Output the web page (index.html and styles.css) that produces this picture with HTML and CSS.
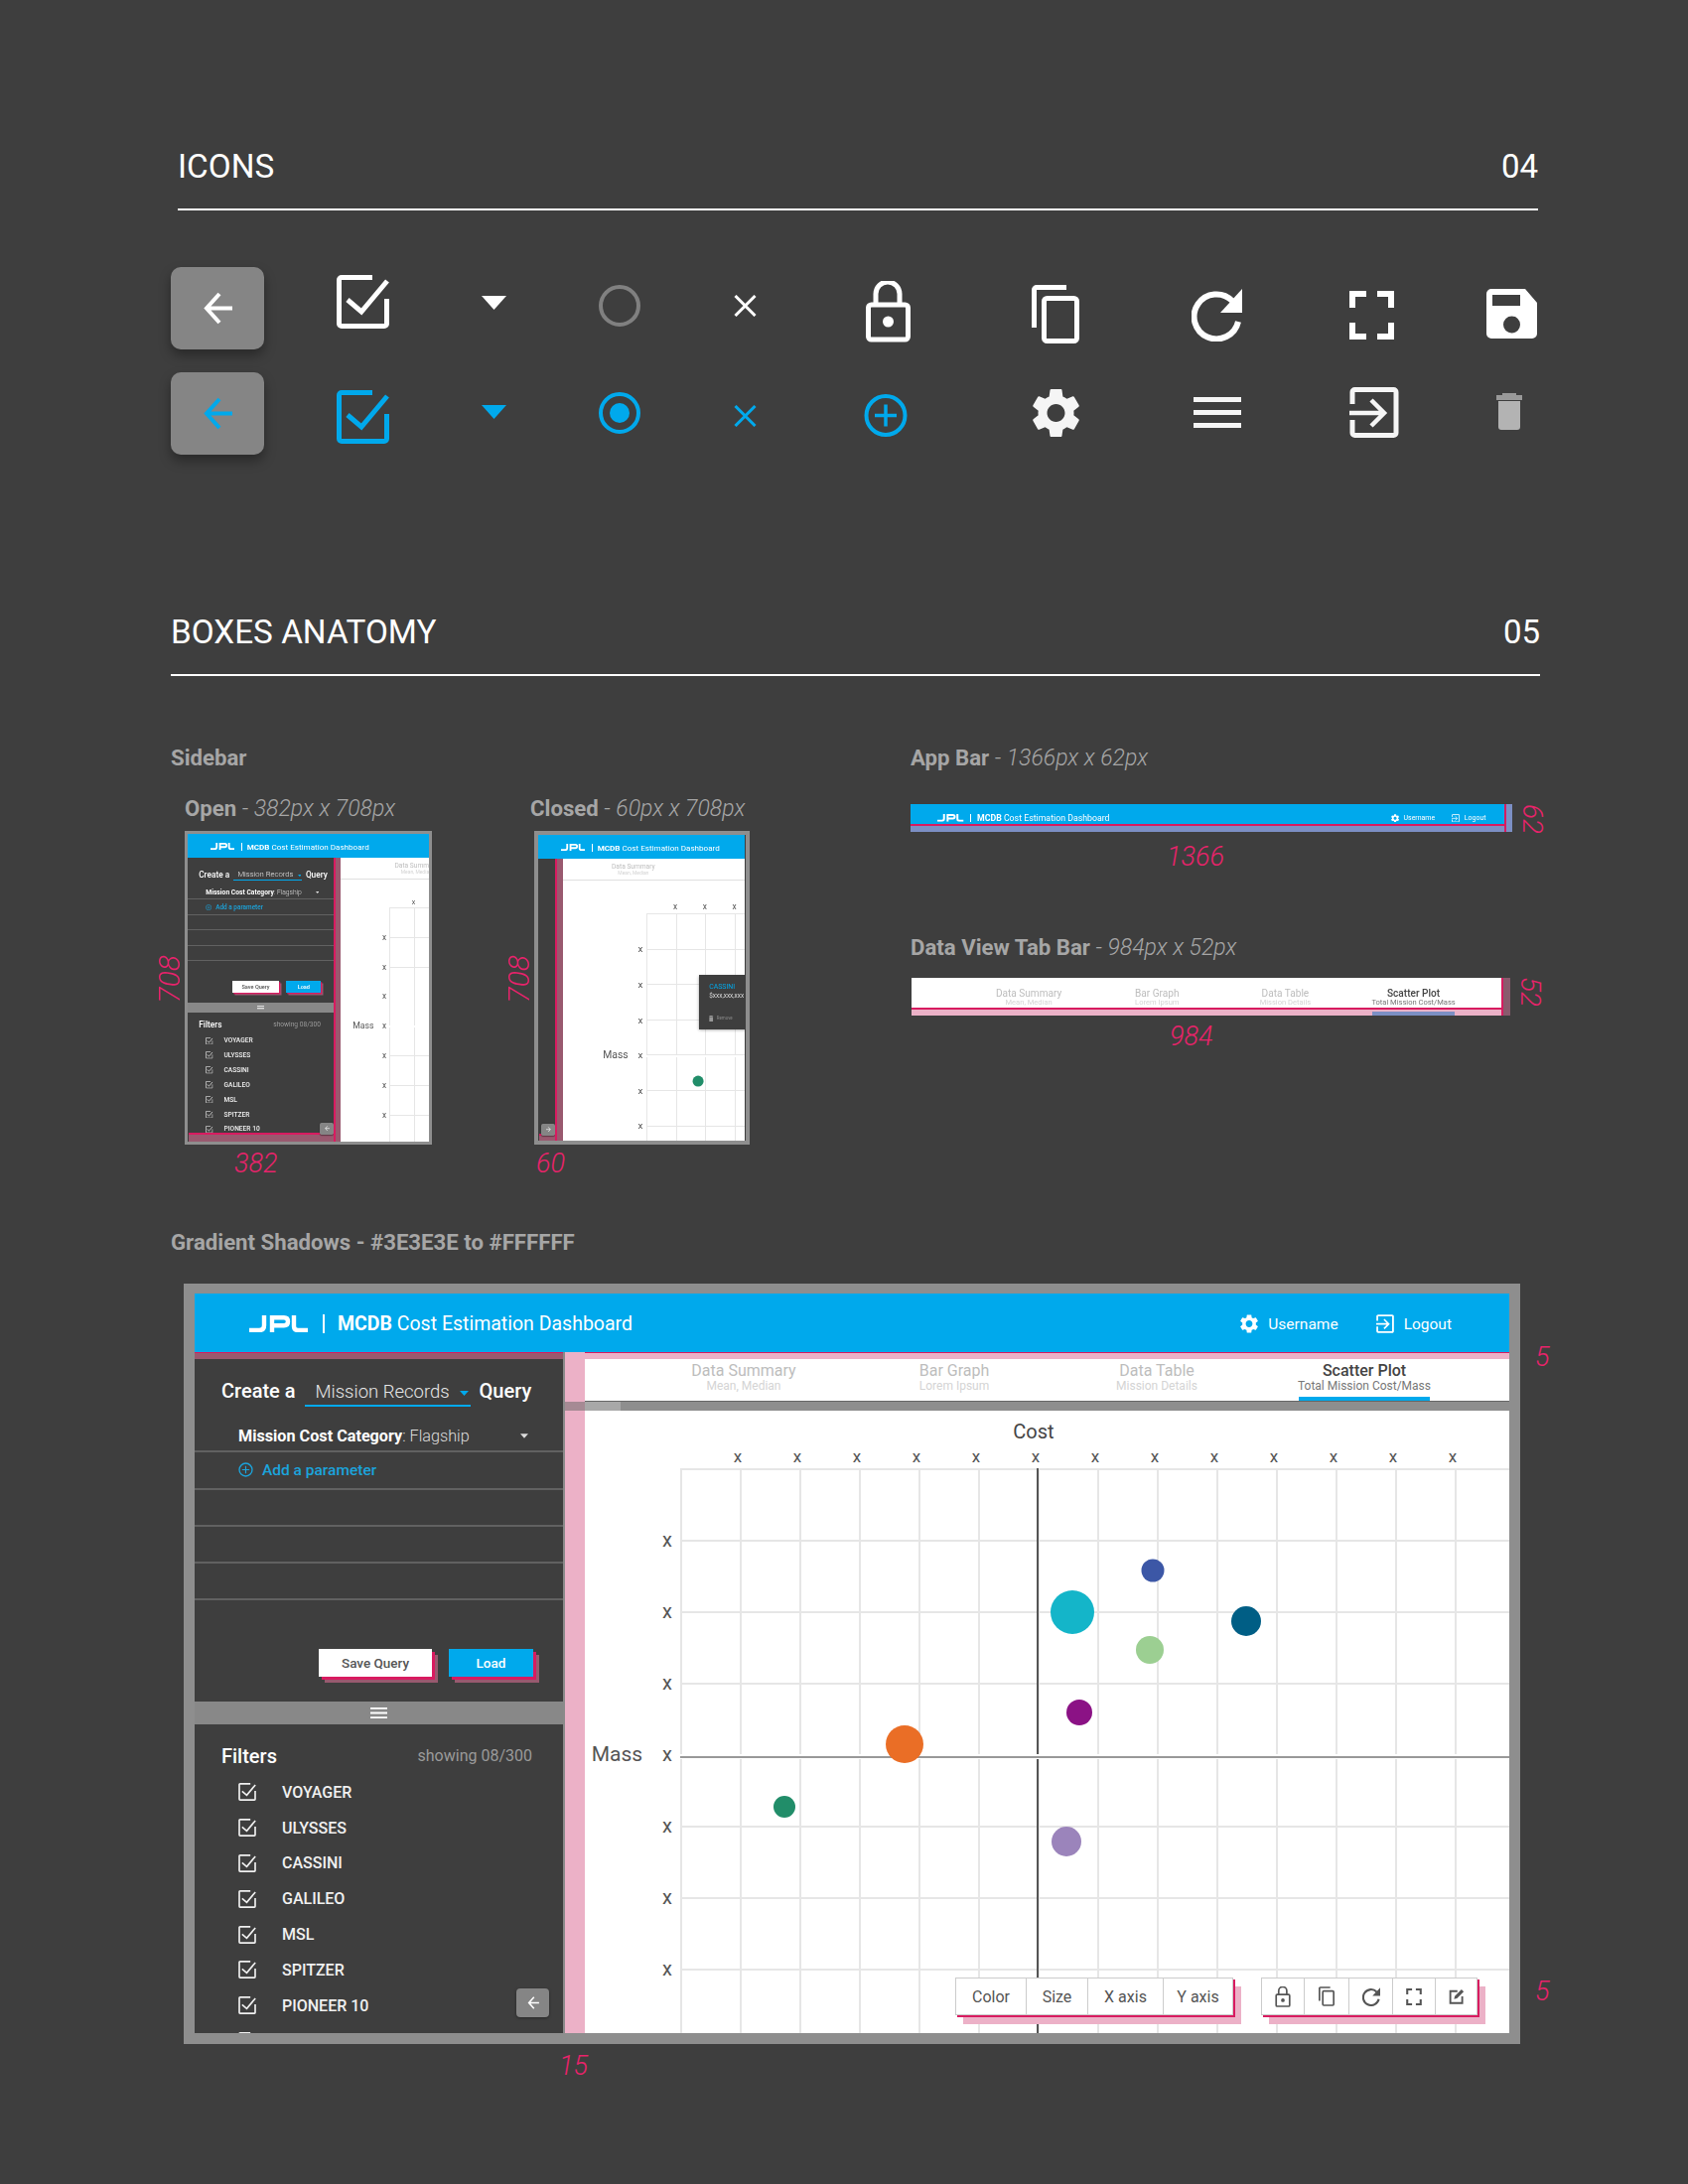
FILE: index.html
```html
<!DOCTYPE html>
<html lang="en">
<head>
    <meta charset="UTF-8">
    <title>MCDB style guide</title>
    <link rel="stylesheet" href="styles.css">
</head>
<body>
    <!-- icon set, used everywhere with <use> -->
    <svg class="icon-defs">
        <symbol id="i-back" viewBox="0 0 30 33"><path d="M30 16.5H4M17 2 4 16.5 17 31" fill="none" stroke="currentColor" stroke-width="4"/></symbol>
        <symbol id="i-check" viewBox="0 0 53 54"><path d="M36 2.5H5A2.5 2.5 0 0 0 2.5 5v44A2.5 2.5 0 0 0 5 51.500h43a2.500 2.500 0 0 0 2.500-2.500V24M11 25l14 12L51 6" fill="none" stroke="currentColor" stroke-width="5"/></symbol>
        <symbol id="i-tri" viewBox="0 0 25 14"><path d="M0 0h25L12.500 14z" fill="currentColor"/></symbol>
        <symbol id="i-circle" viewBox="0 0 42 42"><circle cx="21" cy="21" r="19" fill="none" stroke="currentColor" stroke-width="4"/></symbol>
        <symbol id="i-radio" viewBox="0 0 42 42"><circle cx="21" cy="21" r="19" fill="none" stroke="currentColor" stroke-width="4"/><circle cx="21" cy="21" r="10" fill="currentColor"/></symbol>
        <symbol id="i-x" viewBox="0 0 23 22"><path d="M1.500 1 21.500 21M21.500 1 1.500 21" fill="none" stroke="currentColor" stroke-width="3"/></symbol>
        <symbol id="i-lock" viewBox="0 0 45 62"><rect x="2.500" y="24" width="40" height="35" rx="3" fill="none" stroke="currentColor" stroke-width="5"/><path d="M10 24V13a12 12 0 0 1 24 0v11" fill="none" stroke="currentColor" stroke-width="5"/><circle cx="22.500" cy="41" r="5.500" fill="currentColor"/></symbol>
        <symbol id="i-copy" viewBox="0 0 48 59"><path d="M35 2.500H5A2.500 2.500 0 0 0 2.500 5v38" fill="none" stroke="currentColor" stroke-width="5"/><rect x="12.500" y="13.500" width="33" height="43" rx="3" fill="none" stroke="currentColor" stroke-width="5"/></symbol>
        <symbol id="i-refresh" viewBox="0 0 51 53"><path d="M41 12A22.500 22.500 0 1 0 47 33" fill="none" stroke="currentColor" stroke-width="6"/><path d="M51 0v24H29z" fill="currentColor"/></symbol>
        <symbol id="i-full" viewBox="0 0 45 49"><path d="M3 17V3h14M28 3h14v14M42 32v14H28M17 46H3V32" fill="none" stroke="currentColor" stroke-width="6"/></symbol>
        <symbol id="i-save" viewBox="0 0 51 50"><path fill-rule="evenodd" d="M5 0h34l12 14v31a5 5 0 0 1-5 5H5a5 5 0 0 1-5-5V5a5 5 0 0 1 5-5zM6 6v11h28V6zM25.500 27.500a8.500 8.500 0 1 0 0 17 8.500 8.500 0 0 0 0-17z" fill="currentColor"/></symbol>
        <symbol id="i-plus" viewBox="0 0 44 45"><circle cx="22" cy="22.500" r="19.500" fill="none" stroke="currentColor" stroke-width="4"/><path d="M11 22.500h22M22 11.500v22" fill="none" stroke="currentColor" stroke-width="3.500"/></symbol>
        <symbol id="i-gear" viewBox="2.500 2 19 20"><path fill="currentColor" d="M19.140 12.940c.04-.3.06-.61.06-.94 0-.32-.02-.64-.07-.94l2.030-1.580c.18-.14.23-.41.12-.61l-1.920-3.320c-.12-.22-.37-.29-.59-.22l-2.390.96c-.5-.38-1.030-.7-1.620-.94l-.36-2.540c-.04-.24-.24-.41-.48-.41h-3.840c-.24 0-.43.17-.47.41l-.36 2.540c-.59.24-1.130.57-1.620.94l-2.390-.96c-.22-.08-.47 0-.59.22L2.740 8.870c-.12.21-.08.47.12.61l2.030 1.580c-.05.3-.09.63-.09.94s.02.64.07.94l-2.030 1.580c-.18.14-.23.41-.12.61l1.920 3.320c.12.22.37.29.59.22l2.390-.96c.5.38 1.030.7 1.620.94l.36 2.540c.05.24.24.41.48.41h3.840c.24 0 .44-.17.47-.41l.36-2.540c.59-.24 1.130-.56 1.620-.94l2.390.96c.22.08.47 0 .59-.22l1.920-3.320c.12-.22.07-.47-.12-.61l-2.010-1.580zM12 15.600c-1.980 0-3.600-1.620-3.600-3.600s1.620-3.600 3.600-3.600 3.600 1.620 3.600 3.600-1.620 3.600-3.600 3.600z"/></symbol>
        <symbol id="i-menu" viewBox="0 0 48 31"><path d="M0 0h48v5H0zM0 13h48v5H0zM0 26h48v5H0z" fill="currentColor"/></symbol>
        <symbol id="i-exit" viewBox="0 0 50 51"><path d="M3 17V5A2.500 2.500 0 0 1 5.500 2.500h39A2.500 2.500 0 0 1 47 5v41a2.500 2.500 0 0 1-2.500 2.500h-39A2.500 2.500 0 0 1 3 46V33" fill="none" stroke="currentColor" stroke-width="5"/><path d="M0 26h34M22 13l13 13-13 13" fill="none" stroke="currentColor" stroke-width="4.500"/></symbol>
        <symbol id="i-trash" viewBox="0 0 26 37"><path d="M6 2V0h14v2h6v5H0V2z" fill="#999"/><path d="M2 8h22v26a3 3 0 0 1-3 3H5a3 3 0 0 1-3-3z" fill="currentColor"/></symbol>
        <symbol id="i-edit" viewBox="0 0 24 24"><path d="M13 5H3.500v16h16v-9" fill="none" stroke="currentColor" stroke-width="2.500"/><path d="m8.500 15.500 1-4L18.500 2.500 21.500 5.500 12.500 14.500z" fill="currentColor"/></symbol>
        <symbol id="i-jpl" viewBox="0 0 59 17"><path d="M0 15h10q5 0 5-5V0M23 17V2.200h12q4 0 4 4t-4 4H23M45 0v11q0 4 4 4h10" fill="none" stroke="currentColor" stroke-width="4.400"/></symbol>
    </svg>

    <section class="head head-icons">
        <h2>ICONS</h2>
        <span>04</span>
    </section>

    <div class="icon-grid">
        <div class="back-btn"><svg class="ic-back"><use href="#i-back"/></svg></div>
        <svg class="ic-check t8"><use href="#i-check"/></svg>
        <svg class="ic-tri t29"><use href="#i-tri"/></svg>
        <svg class="ic-circle t18 grey"><use href="#i-circle"/></svg>
        <svg class="ic-x t28"><use href="#i-x"/></svg>
        <svg class="ic-lock t14 l2"><use href="#i-lock"/></svg>
        <svg class="ic-copy t18"><use href="#i-copy"/></svg>
        <svg class="ic-refresh t22"><use href="#i-refresh"/></svg>
        <svg class="ic-full t24 l1"><use href="#i-full"/></svg>
        <svg class="ic-save t22"><use href="#i-save"/></svg>

        <div class="back-btn blue"><svg class="ic-back"><use href="#i-back"/></svg></div>
        <svg class="ic-check t18 blue"><use href="#i-check"/></svg>
        <svg class="ic-tri t33 blue"><use href="#i-tri"/></svg>
        <svg class="ic-circle t20 blue"><use href="#i-radio"/></svg>
        <svg class="ic-x t33 blue"><use href="#i-x"/></svg>
        <svg class="ic-plus t21 blue"><use href="#i-plus"/></svg>
        <svg class="ic-gear t16"><use href="#i-gear"/></svg>
        <svg class="ic-menu t25 l2"><use href="#i-menu"/></svg>
        <svg class="ic-exit t15 l1"><use href="#i-exit"/></svg>
        <svg class="ic-trash t21 l10"><use href="#i-trash"/></svg>
    </div>

    <section class="head head-boxes">
        <h2>BOXES ANATOMY</h2>
        <span>05</span>
    </section>

    <div class="boxes">
        <div class="boxes-left">
            <h3 class="cap">Sidebar</h3>
            <div class="figs">
                <div class="fig fig-open">
                    <h3 class="cap">Open <em>- 382px x 708px</em></h3>
                    <div class="frame-wrap">
                        <div class="frame">
                            <div class="dash dash-open">
                                <header class="appbar">
                                    <svg class="jpl"><use href="#i-jpl"/></svg>
                                    <i class="bar-sep"></i>
                                    <span class="app-title"><b>MCDB</b> Cost Estimation Dashboard</span>
                                </header>
                                <div class="dash-body">
                                    <aside class="sidebar">
                                        <div class="side-shade"></div>
                                        <div class="create-row">
                                            <span>Create a</span>
                                            <div class="select"><span>Mission Records</span><svg class="sel-arrow"><use href="#i-tri"/></svg></div>
                                            <span>Query</span>
                                        </div>
                                        <div class="param first"><span><b>Mission Cost Category</b>: Flagship</span><svg class="param-arrow"><use href="#i-tri"/></svg></div>
                                        <div class="param add"><svg class="add-ic"><use href="#i-plus"/></svg><span>Add a parameter</span></div>
                                        <div class="param"></div>
                                        <div class="param"></div>
                                        <div class="param"></div>
                                        <div class="query-btns"><button class="btn">Save Query</button><button class="btn btn-load">Load</button></div>
                                        <div class="side-split"><svg class="split-ic"><use href="#i-menu"/></svg></div>
                                        <div class="filter-head"><span>Filters</span><small>showing 08/300</small></div>
                                        <ul class="filter-list">
                                            <li><svg><use href="#i-check"/></svg>VOYAGER</li>
                                            <li><svg><use href="#i-check"/></svg>ULYSSES</li>
                                            <li><svg><use href="#i-check"/></svg>CASSINI</li>
                                            <li><svg><use href="#i-check"/></svg>GALILEO</li>
                                            <li><svg><use href="#i-check"/></svg>MSL</li>
                                            <li><svg><use href="#i-check"/></svg>SPITZER</li>
                                            <li><svg><use href="#i-check"/></svg>PIONEER 10</li>
                                        </ul>
                                        <div class="back-small"><svg><use href="#i-back"/></svg></div>
                                    </aside>
                                    <div class="view">
                                        <div class="strip"></div>
                                        <div class="view-main">
                                            <div class="tabs">
                                                <div class="tab"><span class="tab-title">Data Summary</span><span class="tab-sub">Mean, Median</span></div>
                                            </div>
                                            <div class="chart">
                                                <div class="x-labels"><span>x</span></div>
                                                <div class="plot-row">
                                                    <div class="y-axis">
                                                        <div class="y-row">x</div>
                                                        <div class="y-row">x</div>
                                                        <div class="y-row">x</div>
                                                        <div class="y-row"><span class="mass">Mass</span>x</div>
                                                        <div class="y-row">x</div>
                                                        <div class="y-row">x</div>
                                                        <div class="y-row">x</div>
                                                    </div>
                                                    <div class="plot"><i class="axis-x"></i></div>
                                                </div>
                                            </div>
                                        </div>
                                    </div>
                                </div>
                            </div>
                        </div>
                        <span class="dim dim-up d-708">708</span>
                        <span class="dim d-382">382</span>
                    </div>
                </div>
                <div class="fig fig-closed">
                    <h3 class="cap">Closed <em>- 60px x 708px</em></h3>
                    <div class="frame-wrap">
                        <div class="frame">
                            <div class="dash dash-closed">
                                <header class="appbar">
                                    <svg class="jpl"><use href="#i-jpl"/></svg>
                                    <i class="bar-sep"></i>
                                    <span class="app-title"><b>MCDB</b> Cost Estimation Dashboard</span>
                                </header>
                                <div class="dash-body">
                                    <aside class="sidebar">
                                        <div class="back-small"><svg class="flip"><use href="#i-back"/></svg></div>
                                    </aside>
                                    <div class="view">
                                        <div class="strip"></div>
                                        <div class="view-main">
                                            <div class="tabs">
                                                <div class="tab"><span class="tab-title">Data Summary</span><span class="tab-sub">Mean, Median</span></div>
                                            </div>
                                            <div class="chart">
                                                <div class="x-labels"><span>x</span><span>x</span><span>x</span></div>
                                                <div class="plot-row">
                                                    <div class="y-axis">
                                                        <div class="y-row">x</div>
                                                        <div class="y-row">x</div>
                                                        <div class="y-row">x</div>
                                                        <div class="y-row"><span class="mass">Mass</span>x</div>
                                                        <div class="y-row">x</div>
                                                        <div class="y-row">x</div>
                                                    </div>
                                                    <div class="plot">
                                                        <i class="axis-x"></i>
                                                        <i class="dot dot-green"></i>
                                                        <div class="tooltip">
                                                            <strong>CASSINI</strong>
                                                            <p>$xxx,xxx,xxx</p>
                                                            <span><svg><use href="#i-trash"/></svg>Remove</span>
                                                        </div>
                                                    </div>
                                                </div>
                                            </div>
                                        </div>
                                    </div>
                                </div>
                            </div>
                        </div>
                        <span class="dim dim-up d-708">708</span>
                        <span class="dim d-60">60</span>
                    </div>
                </div>
            </div>
        </div>

        <div class="boxes-right">
            <h3 class="cap">App Bar <em>- 1366px x 62px</em></h3>
            <div class="bar-fig">
                <div class="bar-clip">
                    <header class="appbar appbar-mini">
                        <svg class="jpl"><use href="#i-jpl"/></svg>
                        <i class="bar-sep"></i>
                        <span class="app-title"><b>MCDB</b> Cost Estimation Dashboard</span>
                        <div class="app-links">
                            <span><svg class="ic-link"><use href="#i-gear"/></svg>Username</span>
                            <span><svg class="ic-link"><use href="#i-exit"/></svg>Logout</span>
                        </div>
                    </header>
                </div>
                <span class="dim dim-down d-62">62</span>
                <span class="dim d-1366">1366</span>
            </div>

            <h3 class="cap cap-tabbar">Data View Tab Bar <em>- 984px x 52px</em></h3>
            <div class="tab-fig">
                <div class="tab-clip">
                    <div class="tabs tabs-mini">
                        <div class="tab"><span class="tab-title">Data Summary</span><span class="tab-sub">Mean, Median</span></div>
                        <div class="tab"><span class="tab-title">Bar Graph</span><span class="tab-sub">Lorem Ipsum</span></div>
                        <div class="tab"><span class="tab-title">Data Table</span><span class="tab-sub">Mission Details</span></div>
                        <div class="tab active"><span class="tab-title">Scatter Plot</span><span class="tab-sub">Total Mission Cost/Mass</span></div>
                    </div>
                </div>
                <span class="dim dim-down d-52">52</span>
                <span class="dim d-984">984</span>
            </div>
        </div>
    </div>

    <h3 class="cap cap-gradient">Gradient Shadows - #3E3E3E to #FFFFFF</h3>

    <div class="big-wrap">
        <div class="dash dash-big">
            <header class="appbar">
                <svg class="jpl"><use href="#i-jpl"/></svg>
                <i class="bar-sep"></i>
                <span class="app-title"><b>MCDB</b> Cost Estimation Dashboard</span>
                <div class="app-links">
                    <span><svg class="ic-link"><use href="#i-gear"/></svg>Username</span>
                    <span><svg class="ic-link"><use href="#i-exit"/></svg>Logout</span>
                </div>
            </header>
            <div class="dash-body">
                <aside class="sidebar">
                    <div class="side-shade"></div>
                    <div class="create-row">
                        <span>Create a</span>
                        <div class="select"><span>Mission Records</span><svg class="sel-arrow"><use href="#i-tri"/></svg></div>
                        <span>Query</span>
                    </div>
                    <div class="param first"><span><b>Mission Cost Category</b>: Flagship</span><svg class="param-arrow"><use href="#i-tri"/></svg></div>
                    <div class="param add"><svg class="add-ic"><use href="#i-plus"/></svg><span>Add a parameter</span></div>
                    <div class="param"></div>
                    <div class="param"></div>
                    <div class="param"></div>
                    <div class="query-btns"><button class="btn">Save Query</button><button class="btn btn-load">Load</button></div>
                    <div class="side-split"><svg class="split-ic"><use href="#i-menu"/></svg></div>
                    <div class="filter-head"><span>Filters</span><small>showing 08/300</small></div>
                    <ul class="filter-list">
                        <li><svg><use href="#i-check"/></svg>VOYAGER</li>
                        <li><svg><use href="#i-check"/></svg>ULYSSES</li>
                        <li><svg><use href="#i-check"/></svg>CASSINI</li>
                        <li><svg><use href="#i-check"/></svg>GALILEO</li>
                        <li><svg><use href="#i-check"/></svg>MSL</li>
                        <li><svg><use href="#i-check"/></svg>SPITZER</li>
                        <li><svg><use href="#i-check"/></svg>PIONEER 10</li>
                        <li><svg><use href="#i-check"/></svg></li>
                    </ul>
                    <div class="back-small"><svg><use href="#i-back"/></svg></div>
                </aside>
                <div class="view">
                    <div class="strip"></div>
                    <div class="view-main">
                        <div class="view-shade"></div>
                        <div class="tabs">
                            <div class="tab"><span class="tab-title">Data Summary</span><span class="tab-sub">Mean, Median</span></div>
                            <div class="tab"><span class="tab-title">Bar Graph</span><span class="tab-sub">Lorem Ipsum</span></div>
                            <div class="tab"><span class="tab-title">Data Table</span><span class="tab-sub">Mission Details</span></div>
                            <div class="tab active"><span class="tab-title">Scatter Plot</span><span class="tab-sub">Total Mission Cost/Mass</span></div>
                        </div>
                        <div class="band"></div>
                        <div class="chart">
                            <div class="chart-title">Cost</div>
                            <div class="x-labels">
                                <span>x</span><span>x</span><span>x</span><span>x</span><span>x</span><span>x</span><span>x</span><span>x</span><span>x</span><span>x</span><span>x</span><span>x</span><span>x</span>
                            </div>
                            <div class="plot-row">
                                <div class="y-axis">
                                    <div class="y-row">x</div>
                                    <div class="y-row">x</div>
                                    <div class="y-row">x</div>
                                    <div class="y-row"><span class="mass">Mass</span>x</div>
                                    <div class="y-row">x</div>
                                    <div class="y-row">x</div>
                                    <div class="y-row">x</div>
                                </div>
                                <div class="plot">
                                    <i class="axis-y"></i>
                                    <i class="axis-x"></i>
                                    <i class="dot dot-blue"></i>
                                    <i class="dot dot-cyan"></i>
                                    <i class="dot dot-lime"></i>
                                    <i class="dot dot-navy"></i>
                                    <i class="dot dot-purple"></i>
                                    <i class="dot dot-orange"></i>
                                    <i class="dot dot-green"></i>
                                    <i class="dot dot-lavender"></i>
                                </div>
                            </div>
                            <div class="toolbars">
                                <div class="toolbar">
                                    <span class="tool w71">Color</span>
                                    <span class="tool w62">Size</span>
                                    <span class="tool w76">X axis</span>
                                    <span class="tool w69">Y axis</span>
                                </div>
                                <div class="toolbar">
                                    <span class="tool w43"><svg class="t-lock"><use href="#i-lock"/></svg></span>
                                    <span class="tool w45"><svg class="t-copy"><use href="#i-copy"/></svg></span>
                                    <span class="tool w44"><svg class="t-refresh"><use href="#i-refresh"/></svg></span>
                                    <span class="tool w43"><svg class="t-full"><use href="#i-full"/></svg></span>
                                    <span class="tool w41"><svg class="t-edit"><use href="#i-edit"/></svg></span>
                                </div>
                            </div>
                        </div>
                    </div>
                </div>
            </div>
        </div>
        <span class="dim d-5a">5</span>
        <span class="dim d-5b">5</span>
        <span class="dim d-15">15</span>
    </div>
</body>
</html>
```

FILE: styles.css
```css
* {
    margin: 0;
    padding: 0;
    box-sizing: border-box;
}

body {
    background-color: #3e3e3e;
    font-family: Roboto, 'Noto Sans', sans-serif;
    color: #fff;
    width: 1700px;
    min-height: 2200px;
    padding-top: 148px;
}

.icon-defs {
    display: block;
    width: 0;
    height: 0;
}

svg {
    display: block;
}

/* section headers */
.head {
    display: flex;
    justify-content: space-between;
    border-bottom: 2px solid #fff;
    font-size: 33px;
    line-height: 40px;
}

.head h2 {
    font-weight: 400;
    font-size: 33.300px;
}

.head-icons {
    margin-left: 179px;
    width: 1370px;
    padding-bottom: 22px;
}

.head-boxes {
    margin-left: 172px;
    width: 1379px;
    margin-top: 136px;
    padding-bottom: 22px;
}

/* icon sheet */
.icon-grid {
    margin: 57px 0 0 172px;
    display: grid;
    grid-template-columns: 167px 146px 118px 136px 131px 169px 161px 158px 139px 60px;
    grid-auto-rows: 106px;
    align-items: start;
    justify-items: start;
    color: #fff;
}

.blue { color: #00a9ec; }
.grey { color: #808080; }

.t8 { margin-top: 8px; }
.t14 { margin-top: 14px; }
.t15 { margin-top: 15px; }
.t16 { margin-top: 16px; }
.t18 { margin-top: 18px; }
.t20 { margin-top: 20px; }
.t21 { margin-top: 21px; }
.t22 { margin-top: 22px; }
.t24 { margin-top: 24px; }
.t25 { margin-top: 25px; }
.t28 { margin-top: 28px; }
.t29 { margin-top: 29px; }
.t33 { margin-top: 33px; }
.l1 { margin-left: 1px; }
.l2 { margin-left: 2px; }
.l10 { margin-left: 10px; }

.back-btn {
    width: 94px;
    height: 83px;
    background-color: #858585;
    border-radius: 10px;
    box-shadow: 0 6px 12px rgba(0, 0, 0, 0.35);
    display: flex;
    justify-content: center;
    align-items: center;
}

.ic-back { width: 30px; height: 33px; }
.ic-check { width: 53px; height: 54px; }
.ic-tri { width: 25px; height: 14px; }
.ic-circle { width: 42px; height: 42px; }
.ic-x { width: 23px; height: 22px; }
.ic-lock { width: 45px; height: 62px; }
.ic-copy { width: 48px; height: 59px; }
.ic-refresh { width: 51px; height: 53px; }
.ic-full { width: 45px; height: 49px; }
.ic-save { width: 51px; height: 50px; }
.ic-plus { width: 44px; height: 45px; }
.ic-gear { width: 49px; height: 50px; color: #f5f5f5; }
.ic-menu { width: 48px; height: 31px; color: #f5f5f5; }
.ic-exit { width: 50px; height: 51px; color: #f5f5f5; }
.ic-trash { width: 26px; height: 37px; color: #b3b3b3; }

/* captions and red measures */
.cap {
    font-size: 22.200px;
    line-height: 26px;
    font-weight: 700;
    color: #a6a6a6;
}

.cap em {
    font-size: 23px;
    line-height: 1;
    font-weight: 300;
    font-style: italic;
}

.dim {
    position: absolute;
    font-size: 27px;
    line-height: 29px;
    font-weight: 300;
    font-style: italic;
    color: #e9236b;
}

.dim-up {
    writing-mode: vertical-rl;
    transform: rotate(180deg);
    font-size: 30px;
}

.dim-down {
    writing-mode: vertical-rl;
    font-size: 28px;
}

.boxes {
    display: grid;
    grid-template-columns: 745px 1fr;
    margin: 69px 0 0 172px;
}

.figs {
    display: flex;
    margin-top: 25px;
}

.fig-open {
    margin-left: 14px;
    width: 348px;
}

.frame-wrap {
    position: relative;
    margin-top: 10px;
}

.frame {
    border: 3px solid #8e8e8e;
    overflow: hidden;
    width: 249px;
    height: 316px;
    filter: blur(0.35px);
}

.fig-closed .frame-wrap {
    margin-left: 4px;
}

.fig-closed .frame {
    border-width: 4px;
    width: 217px;
}

.d-708 { left: -30px; top: 125px; }
.d-382 { left: 50px; top: 321px; }
.d-60 { left: 2px; top: 321px; }

/* the dashboard, also shrunk with zoom for the small figures */
.dash {
    display: flex;
    flex-direction: column;
    width: 1324px;
    height: 745px;
    overflow: hidden;
    background-color: #fff;
}

.dash-body {
    flex: 1;
    display: flex;
    min-height: 0;
}

.appbar {
    flex: none;
    height: 59px;
    background-color: #00a9ec;
    display: flex;
    align-items: center;
    padding: 2px 58px 0 55px;
    color: #fff;
}

.jpl {
    width: 59px;
    height: 17px;
}

.bar-sep {
    width: 2px;
    height: 19px;
    background-color: #fff;
    margin: 0 13px 0 15px;
}

.app-title {
    font-size: 19.500px;
}

.app-title b {
    font-weight: 700;
}

.app-links {
    margin-left: auto;
    display: flex;
    gap: 38px;
    font-size: 15.500px;
}

.app-links span {
    display: flex;
    align-items: center;
    gap: 10px;
}

.ic-link {
    width: 18px;
    height: 19px;
}

.sidebar {
    flex: none;
    width: 371px;
    background-color: #3e3e3e;
    position: relative;
    overflow: hidden;
}

.side-shade {
    height: 7px;
    background-color: #99596f;
    border-top: 1px solid #d81b60;
}

.create-row {
    margin-top: 16px;
    height: 32px;
    padding-left: 27px;
    display: flex;
    align-items: center;
    font-size: 20px;
    font-weight: 500;
}

.select {
    width: 167px;
    height: 32px;
    margin: 0 9px 0 9px;
    padding: 3px 2px 0 11px;
    border-bottom: 2px solid #00a9ec;
    display: flex;
    justify-content: space-between;
    align-items: center;
    font-size: 18.500px;
    font-weight: 300;
    color: #e6e6e6;
}

.sel-arrow {
    width: 9px;
    height: 5px;
    color: #00a9ec;
    margin-top: 4px;
}

.param {
    height: 37px;
    padding: 0 35px 0 44px;
    border-bottom: 2px solid #616161;
    display: flex;
    align-items: center;
}

.param.first {
    height: 46px;
    padding-top: 19px;
    padding-bottom: 4px;
    justify-content: space-between;
    font-size: 16.200px;
    font-weight: 300;
    color: #ddd;
}

.param.first b {
    font-weight: 700;
    color: #fff;
}

.param-arrow {
    width: 8px;
    height: 5px;
}

.param.add {
    height: 37.500px;
    color: #1ba4dc;
    font-size: 15.500px;
    font-weight: 500;
    gap: 9px;
}

.add-ic {
    width: 15px;
    height: 15px;
}

.query-btns {
    margin-top: 49px;
    padding-right: 30px;
    display: flex;
    justify-content: flex-end;
    gap: 17px;
}

.btn {
    width: 114px;
    height: 28px;
    border: none;
    background-color: #fff;
    color: #555;
    font-family: inherit;
    font-size: 13.500px;
    font-weight: 500;
    box-shadow: 3px 3px 0 #d81b60, 6px 6px 0 #99596f;
}

.btn-load {
    width: 85px;
    background-color: #00a9ec;
    color: #fff;
}

.side-split {
    margin-top: 25px;
    height: 23px;
    background-color: #888;
    display: flex;
    justify-content: center;
    align-items: center;
}

.split-ic {
    width: 17px;
    height: 11px;
    color: #fff;
}

.filter-head {
    margin-top: 20px;
    padding: 0 31px 0 27px;
    display: flex;
    justify-content: space-between;
    align-items: center;
    line-height: 24px;
    font-size: 20px;
    font-weight: 500;
}

.filter-head small {
    font-size: 16px;
    font-weight: 400;
    color: #9a9a9a;
}

.filter-list {
    list-style: none;
    margin-top: 7px;
}

.filter-list li {
    height: 35.800px;
    padding-left: 44px;
    display: flex;
    align-items: center;
    gap: 26px;
    font-size: 16px;
    font-weight: 500;
    color: #f0f0f0;
}

.filter-list svg {
    width: 18px;
    height: 18px;
}

.back-small {
    position: absolute;
    right: 14px;
    bottom: 16px;
    width: 33px;
    height: 29px;
    background-color: #858585;
    border-radius: 4px;
    box-shadow: 0 1px 3px rgba(0, 0, 0, 0.4);
    display: flex;
    justify-content: center;
    align-items: center;
}

.back-small svg {
    width: 12px;
    height: 13px;
}

.flip {
    transform: scaleX(-1);
}

.view {
    flex: 1;
    display: flex;
    min-width: 0;
}

.strip {
    flex: none;
    width: 22px;
    background-color: #ecb1c7;
    border-left: 2px solid #8a8a8a;
    position: relative;
}

.strip::after {
    content: "";
    position: absolute;
    left: 0;
    right: 0;
    top: 50px;
    height: 9px;
    background-color: #a68a94;
}

.view-main {
    flex: 1;
    min-width: 0;
    display: flex;
    flex-direction: column;
}

.view-shade {
    flex: none;
    height: 7px;
    background-color: #ecb1c7;
    border-top: 1px solid #d81b60;
}

.tabs {
    flex: none;
    height: 43px;
    padding-left: 54px;
    background-color: #fff;
    border-bottom: 1px solid #666;
    display: grid;
    grid-template-columns: 212px 212px 196px 222px;
}

.tab {
    position: relative;
    display: flex;
    flex-direction: column;
    align-items: center;
}

.tab-title {
    font-size: 16px;
    line-height: 24px;
    color: #bdbdbd;
}

.tab-sub {
    font-size: 12px;
    line-height: 14px;
    margin-top: -4px;
    color: #d4d4d4;
}

.tab.active .tab-title {
    color: #444;
    font-weight: 500;
}

.tab.active .tab-sub {
    color: #777;
}

.tab.active::after {
    content: "";
    position: absolute;
    bottom: 0;
    width: 132px;
    height: 4px;
    background-color: #00a9ec;
}

.band {
    flex: none;
    height: 9px;
    background: linear-gradient(to right, #a8a8a8 36px, #8e8e8e 36px);
}

.chart {
    flex: 1;
    min-height: 0;
    position: relative;
    overflow: hidden;
    background-color: #fff;
}

.chart-title {
    margin: 9px 0 0 97px;
    width: 710px;
    text-align: center;
    font-size: 20px;
    line-height: 24px;
    color: #444;
}

.x-labels {
    display: flex;
    margin: 3px 0 2px 124px;
    font-size: 17px;
    line-height: 20px;
    color: #555;
}

.x-labels span {
    flex: none;
    width: 60px;
    text-align: center;
}

.plot-row {
    display: flex;
    height: 569px;
}

.y-axis {
    flex: none;
    width: 96px;
    padding-top: 36px;
}

.y-row {
    height: 72px;
    padding-right: 8px;
    display: flex;
    justify-content: flex-end;
    align-items: center;
    gap: 20px;
    font-size: 20px;
    color: #555;
}

.mass {
    font-size: 21px;
}

.plot {
    flex: 1;
    position: relative;
    background-image:
        repeating-linear-gradient(to right, #e6e6e6 0, #e6e6e6 2px, transparent 2px, transparent 60px),
        repeating-linear-gradient(to bottom, #e6e6e6 0, #e6e6e6 2px, transparent 2px, transparent 72px);
}

.axis-y {
    position: absolute;
    left: 359px;
    top: 0;
    bottom: 0;
    width: 2px;
    background-color: #555;
}

.axis-x {
    position: absolute;
    left: 0;
    right: 0;
    top: 288px;
    height: 5px;
    background-color: #999;
    border-top: 2px solid #fff;
    border-bottom: 1px solid #fff;
}

.dot {
    position: absolute;
    border-radius: 50%;
    transform: translate(-50%, -50%);
}

.dot-blue { left: 476px; top: 103px; width: 23px; height: 23px; background-color: #3c57a6; }
.dot-cyan { left: 395px; top: 145px; width: 44px; height: 44px; background-color: #14b5c9; }
.dot-lime { left: 473px; top: 183px; width: 28px; height: 28px; background-color: #9ccf92; }
.dot-navy { left: 570px; top: 154px; width: 30px; height: 30px; background-color: #005e85; }
.dot-purple { left: 402px; top: 246px; width: 26px; height: 26px; background-color: #8b1285; }
.dot-orange { left: 226px; top: 278px; width: 38px; height: 38px; background-color: #ea6e26; }
.dot-green { left: 105px; top: 341px; width: 22px; height: 22px; background-color: #218d69; }
.dot-lavender { left: 389px; top: 376px; width: 30px; height: 30px; background-color: #9b84bb; }

/* chart toolbars */
.toolbars {
    position: absolute;
    right: 32px;
    bottom: 18px;
    display: flex;
    gap: 28px;
}

.toolbar {
    display: flex;
    height: 38px;
    background-color: #fff;
    border: 1px solid #ccc;
    box-shadow: 2px 2px 0 #d81b60, 8px 9px 0 #ecb1c7;
    color: #555;
    font-size: 16px;
}

.tool {
    display: flex;
    justify-content: center;
    align-items: center;
    border-right: 1px solid #ccc;
}

.tool:last-child {
    border-right: none;
}

.w41 { width: 41px; }
.w43 { width: 43px; }
.w44 { width: 44px; }
.w45 { width: 45px; }
.w62 { width: 62px; }
.w69 { width: 69px; }
.w71 { width: 71px; }
.w76 { width: 76px; }

.t-lock { width: 16px; height: 21px; }
.t-copy { width: 16px; height: 20px; }
.t-refresh { width: 18px; height: 19px; }
.t-full { width: 16px; height: 17px; }
.t-edit { width: 18px; height: 18px; }

/* big figure */
.cap-gradient {
    margin: 85px 0 0 172px;
}

.big-wrap {
    position: relative;
    margin: 29px 0 0 185px;
    width: 1346px;
    border: solid #8e8e8e;
    border-width: 10px 11px 11px;
}

.d-5a { left: 1350px; top: 50px; }
.d-5b { left: 1350px; top: 689px; }
.d-15 { left: 367px; top: 764px; }

/* open sidebar figure */
.dash-open,
.dash-closed {
    zoom: 0.415;
    height: 747px;
}

.dash-open {
    width: 585px;
}

.dash-closed {
    width: 501px;
}

.dash-open .sidebar {
    width: 354px;
}

.dash-open .side-shade {
    background-color: transparent;
    border-top: none;
}

.dash-open .sidebar::after,
.dash-closed .sidebar::after {
    content: "";
    position: absolute;
    left: 2px;
    right: 0;
    bottom: 0;
    height: 17px;
    background-color: #99596f;
    border-top: 5px solid #d81b60;
}

.dash-open .back-small,
.dash-closed .back-small {
    right: 0;
    bottom: 17px;
    z-index: 1;
}

.dash-open .strip,
.dash-closed .strip {
    width: 17px;
    background-color: #99596f;
    border-left: 5px solid #d81b60;
}

.dash-open .strip::after,
.dash-closed .strip::after {
    display: none;
}

.dash-open .tabs,
.dash-closed .tabs {
    height: 52px;
    padding: 8px 0 0 78px;
    border-bottom: 2px solid #e0e0e0;
    grid-template-columns: 212px;
}

.dash-open .x-labels {
    margin: 45px 0 2px 147px;
}

.dash-open .y-axis {
    width: 119px;
}

/* closed sidebar figure: the chart is shown larger */
.dash-closed .sidebar {
    width: 41px;
}

.dash-closed .tabs {
    padding-left: 65px;
}

.dash-closed .strip {
    width: 19px;
}

.dash-closed .chart {
    zoom: 1.192;
}

.dash-closed .x-labels {
    margin: 45px 0 2px 199px;
}

.dash-closed .y-axis {
    width: 171px;
}

.tooltip {
    position: absolute;
    left: 107px;
    top: 124px;
    width: 150px;
    height: 113px;
    padding: 18px 20px;
    background-color: #3e3e3e;
    box-shadow: 0 2px 6px rgba(0, 0, 0, 0.4);
    font-size: 13px;
    line-height: 17px;
    color: #ddd;
}

.tooltip strong {
    display: block;
    font-size: 14px;
    font-weight: 400;
    color: #00a9ec;
}

.tooltip span {
    display: flex;
    align-items: center;
    gap: 6px;
    margin-top: 30px;
    font-size: 9px;
    color: #888;
}

.tooltip svg {
    width: 9px;
    height: 13px;
    color: #999;
}

/* app bar figure */
.bar-fig {
    position: relative;
    margin-top: 34px;
    width: 606px;
    height: 28px;
}

.bar-clip {
    position: relative;
    width: 606px;
    height: 28px;
    overflow: hidden;
    filter: blur(0.3px);
}

.appbar-mini {
    zoom: 0.45;
    width: 1346px;
    height: 62px;
    padding: 0 58px 0 60px;
}

.bar-clip::before {
    content: "";
    position: absolute;
    left: 0;
    right: 0;
    bottom: 0;
    height: 6px;
    background-color: #7c8fc4;
    border-top: 2px solid #d81b60;
    z-index: 1;
}

.bar-clip::after {
    content: "";
    position: absolute;
    top: 0;
    right: 0;
    bottom: 0;
    width: 6px;
    background-color: #7c8fc4;
    border-left: 2px solid #d81b60;
    z-index: 1;
}

.d-62 { left: 612px; top: 0; }
.d-1366 { left: 258px; top: 39px; }

/* tab bar figure */
.cap-tabbar {
    margin-top: 103px;
}

.tab-fig {
    position: relative;
    margin: 18px 0 0 1px;
    width: 603px;
    height: 38px;
}

.tab-clip {
    position: relative;
    width: 603px;
    height: 38px;
    overflow: hidden;
    background-color: #fff;
    filter: blur(0.3px);
}

.tab-clip::before {
    content: "";
    position: absolute;
    left: 0;
    right: 7px;
    top: 30px;
    bottom: 0;
    background-color: #ecb1c7;
    border-top: 2px solid #d81b60;
}

.tab-clip::after {
    content: "";
    position: absolute;
    top: 0;
    right: 0;
    bottom: 0;
    width: 7px;
    background-color: #8a5a6d;
    border-left: 2px solid #d81b60;
}

.tabs-mini {
    zoom: 0.63;
    position: relative;
    z-index: 1;
    width: 957px;
    height: 60px;
    padding: 13px 0 0 85px;
    background-color: transparent;
    border-bottom: none;
    grid-template-columns: 205px 205px 205px 205px;
}

.tabs-mini .active::after {
    background-color: #7c8fc4;
    height: 6px;
}

.d-52 { left: 609px; top: -1px; }
.d-984 { left: 260px; top: 45px; }
```
